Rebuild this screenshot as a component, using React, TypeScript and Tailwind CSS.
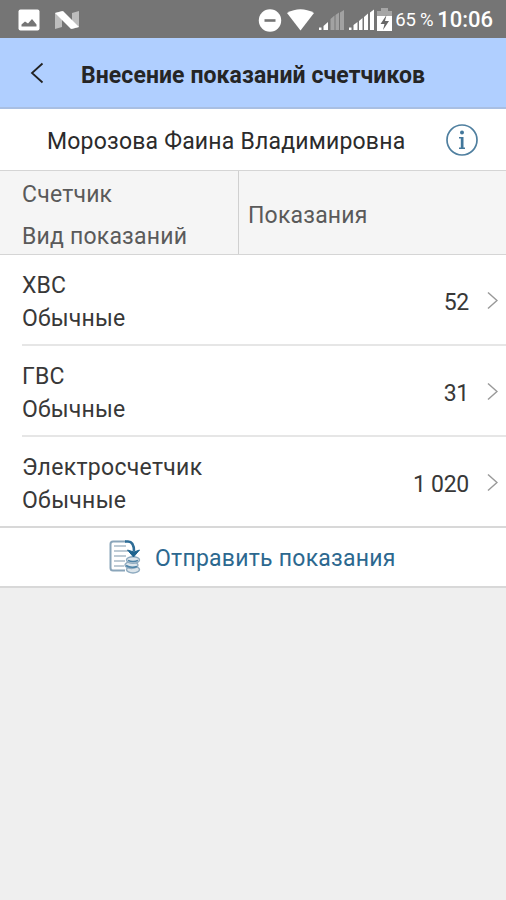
import React from "react";

type Meter = { name: string; kind: string; value: string };

const meters: Meter[] = [
  { name: "ХВС", kind: "Обычные", value: "52" },
  { name: "ГВС", kind: "Обычные", value: "31" },
  { name: "Электросчетчик", kind: "Обычные", value: "1 020" },
];

function StatusBar() {
  return (
    <div className="flex h-[38px] items-center bg-[#757575] pl-[18px] pr-[13px] pt-px text-white">
      <svg width="22" height="22" viewBox="0 0 22 22">
        <rect x="0.5" y="0.5" width="21" height="21" rx="2" fill="#fff" />
        <path d="M3.500 17.500v-2l3.500-3 3 2 4-4.500 4.500 5.500v2z" fill="#757575" />
      </svg>
      <svg className="ml-[15px]" width="24" height="20" viewBox="0 0 24 20">
        <path d="M0 3l7-2v16l-7 2zM17 3l7-2v16l-7 2z" fill="#bdbdbd" />
        <path d="M0 3l8-2 16 16-8 2z" fill="#fff" />
      </svg>
      <div className="flex-1" />
      <svg className="shrink-0" width="136" height="26" viewBox="0 0 136 26">
        <circle cx="12" cy="13.5" r="11.2" fill="#fff" />
        <path d="M6.500 13.500h11" stroke="#757575" strokeWidth="2.600" />
        <path d="M29 6q13.500-7.500 27 0L42.500 23.500z" fill="#fff" />
        <path d="M61 20.500h2.500V23H61zM65.500 19l4.500-4v8h-4.500z" fill="#fff" />
        <path d="M72.500 12l4-3.500V23h-4zM77.500 8l3.500-2.500V23h-3.500zM82 5.500L86 3v20h-4z" fill="#a2a2a2" />
        <path d="M91 20.500h2.500V23H91zM95.500 18l4-3v8h-4zM101 14l3.500-3v12H101zM106 10l4-3.500V23h-4zM112 5.500l4-3V23h-4z" fill="#fff" />
        <path d="M119 10V4h4V1h7v3h4v6z" fill="#a6a6a6" />
        <path d="M119 9h15v15h-15z" fill="#fff" />
        <path d="M128.500 8l-6 9h4l-1.500 6 6-9h-4z" fill="#666" />
      </svg>
      <span className="ml-px w-[40px] whitespace-nowrap pt-px text-[18.500px] leading-none [word-spacing:-0.5px]">65 %</span>
      <span className="ml-[2px] whitespace-nowrap pt-px text-[22px] font-medium leading-none">10:06</span>
    </div>
  );
}

function ChevronRight() {
  return (
    <svg className="ml-[18px] shrink-0" width="11" height="19" viewBox="0 0 11 19" fill="none" stroke="#999" strokeWidth="1.500">
      <path d="M1 1.500l9 8-9 8" />
    </svg>
  );
}

function MeterRow({ meter, last }: { meter: Meter; last: boolean }) {
  return (
    <div className={last ? "h-[90px] pl-[22px]" : "h-[91px] pl-[22px]"}>
      <div className={last ? "flex h-full items-center pr-[8px]" : "flex h-full items-center border-b-2 border-[#e6e6e6] pr-[8px]"}>
        <div className={last ? "flex-1 pt-[3px] text-[23px] leading-[33px] tracking-[0.300px]" : "flex-1 pt-[5px] text-[23px] leading-[33px] tracking-[0.150px]"}>
          <div>{meter.name}</div>
          <div>{meter.kind}</div>
        </div>
        <span className={last ? "pt-[6px] text-[23px] tracking-[-0.300px]" : "pt-[8px] text-[23px] tracking-[-0.300px]"}>{meter.value}</span>
        <div className={last ? "" : "pt-[2px]"}>
          <ChevronRight />
        </div>
      </div>
    </div>
  );
}

function SendIcon() {
  return (
    <svg width="32" height="34" viewBox="0 0 32 34" fill="none">
      <path d="M17 1.500H4Q1.500 1.500 1.500 4v24q0 2.500 2.500 2.500h12" stroke="#8aa5ba" strokeWidth="2" />
      <path d="M5 6h12M5 11h14M5 16h12M5 21h11M5 26h10" stroke="#a9bac8" strokeWidth="1.500" />
      <path d="M16 1.500h3q6 0 6 10" stroke="#2d6c96" strokeWidth="2.600" />
      <g fill="#dce5eb" stroke="#8fabc0" strokeWidth="1.400">
        <ellipse cx="24" cy="29.500" rx="6.500" ry="3.500" />
        <ellipse cx="22.500" cy="25" rx="6.500" ry="3.500" />
        <ellipse cx="24" cy="20" rx="6.500" ry="3.200" />
      </g>
      <path d="M19 20.500q5 2 10 0M17 25.500q5 3 11 1" stroke="#4d83a7" strokeWidth="1.500" />
      <path d="M18.500 10l6 7 6-7-5.500 2z" fill="#1f648f" stroke="#1f648f" />
    </svg>
  );
}

export default function App() {
  return (
    <div className="flex h-[900px] w-[506px] flex-col overflow-hidden bg-[#efefef] font-['Roboto','Noto_Sans',sans-serif] text-[#383838]">
      <StatusBar />
      <header className="flex h-[71px] items-center border-b-2 border-[#a9bfe2] bg-[#b0cfff] pl-[30px]">
        <svg width="14" height="22" viewBox="0 0 14 22" fill="none" stroke="#222" strokeWidth="1.800">
          <path d="M12.500 1.500L2 11l10.500 9.500" />
        </svg>
        <h1 className="ml-[37px] whitespace-nowrap pt-[7px] text-[23px] font-bold tracking-[0.080px] text-[#252525]">Внесение показаний счетчиков</h1>
      </header>
      <section className="flex h-[61px] items-center bg-white pl-[47px] pr-[27px]">
        <span className="flex-1 whitespace-nowrap pt-[5px] text-[23px] tracking-[0.200px] text-[#2b2b2b]">Морозова Фаина Владимировна</span>
        <svg width="34" height="34" viewBox="0 0 34 34" fill="none">
          <circle cx="17" cy="17" r="15" stroke="#4f7f9f" strokeWidth="1.700" />
          <circle cx="17" cy="9.500" r="2" fill="#42779b" />
          <path d="M14 14h4.500v10.500H20V26h-6v-1.500h1.800v-9H14z" fill="#42779b" />
        </svg>
      </section>
      <section className="flex h-[85px] border-y border-[#d5d5d5] bg-[#f5f5f5] text-[23px] tracking-[0.200px] text-[#5a5a5a]">
        <div className="w-[239px] border-r border-[#d0d0d0] pl-[22px] pt-[3px] leading-[42px]">
          <div>Счетчик</div>
          <div>Вид показаний</div>
        </div>
        <div className="flex items-center pl-[9px] pt-[8px]">Показания</div>
      </section>
      <main className="bg-white">
        {meters.map((meter, i) => (
          <MeterRow key={meter.name} meter={meter} last={i === meters.length - 1} />
        ))}
      </main>
      <button className="-mt-px flex h-[62px] items-center border-y-2 border-[#d8d8d8] bg-white pl-[109px] text-left text-[#2c688f]">
        <SendIcon />
        <span className="ml-[14px] whitespace-nowrap pt-[5px] text-[23px] tracking-[0.250px]">Отправить показания</span>
      </button>
    </div>
  );
}
